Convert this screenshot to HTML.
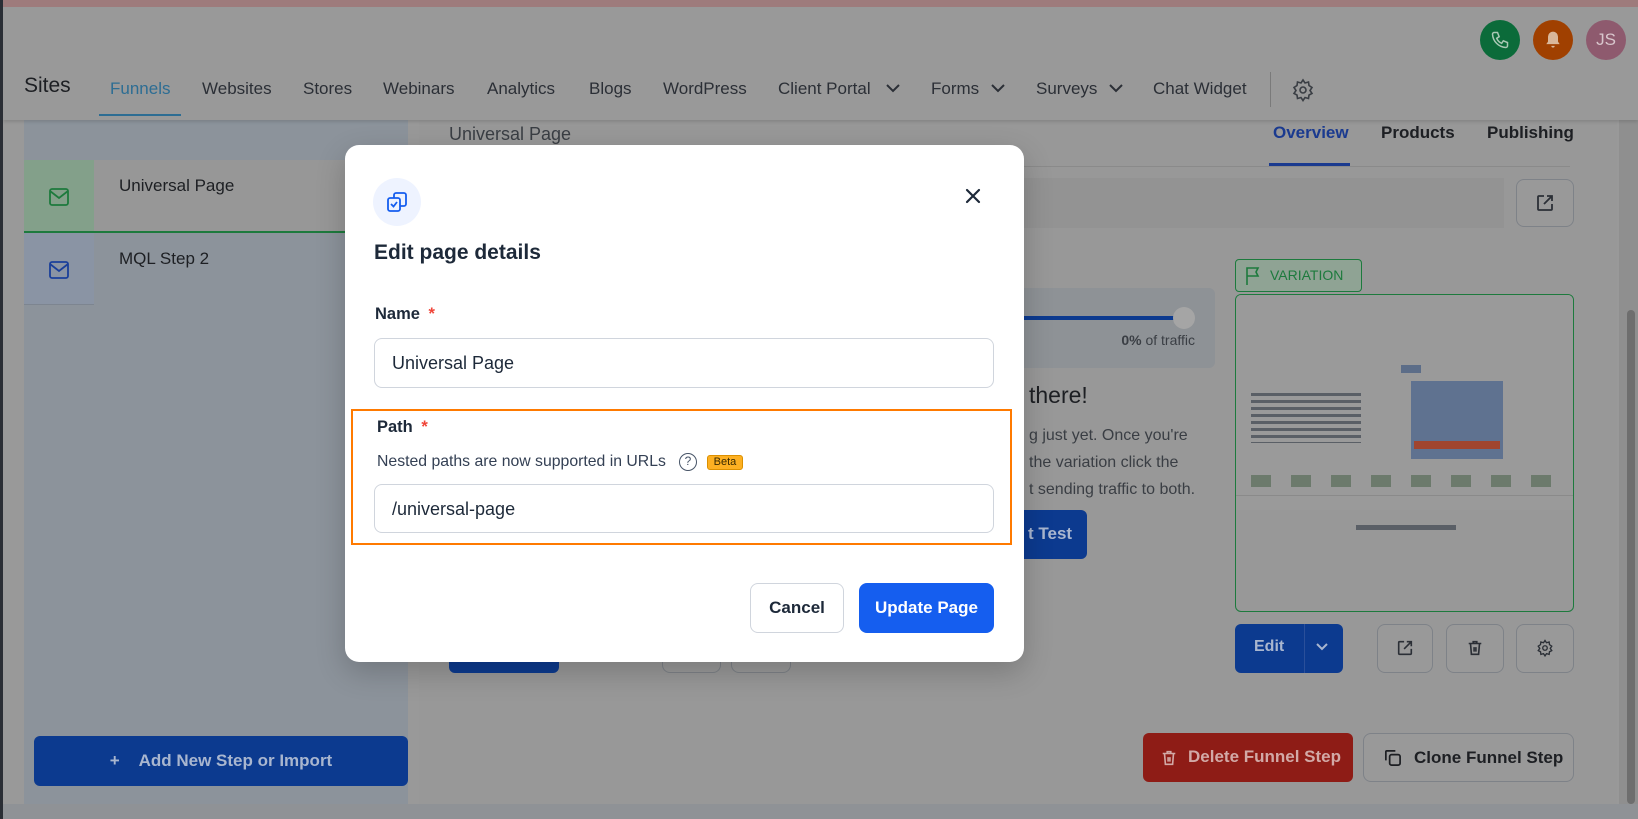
<!DOCTYPE html>
<html><head><meta charset="utf-8"><style>
*{box-sizing:border-box;margin:0;padding:0}
body{width:1638px;height:819px;overflow:hidden;background:#999;font-family:"Liberation Sans",sans-serif;position:relative}
.a{position:absolute}
.nav{position:absolute;top:79px;font-size:17px;color:#2b2f36;z-index:3}
.circ{position:absolute;border-radius:50%;width:40px;height:40px;display:flex;align-items:center;justify-content:center;z-index:3}
.btnO{position:absolute;border:1px solid #7e8288;border-radius:8px;background:#999}
.h{z-index:3}
</style></head><body>
<div class="a h" style="left:0;top:0;width:1638px;height:7px;background:#9e7b7c;z-index:4"></div>
<div class="a" style="left:0;top:0;width:3px;height:819px;background:#2a2e35;z-index:4"></div>
<!-- header -->
<div class="a h" style="left:3px;top:7px;width:1635px;height:113px;background:#999;box-shadow:0 2px 3px rgba(0,0,0,.12)"></div>
<div class="a h" style="left:24px;top:74px;font-size:21px;color:#1d1f23">Sites</div>
<div class="nav" style="left:110px;color:#2d6d93">Funnels</div>
<div class="a h" style="left:99px;top:114px;width:82px;height:2px;background:#2d6d93"></div>
<div class="nav" style="left:202px">Websites</div>
<div class="nav" style="left:303px">Stores</div>
<div class="nav" style="left:383px">Webinars</div>
<div class="nav" style="left:487px">Analytics</div>
<div class="nav" style="left:589px">Blogs</div>
<div class="nav" style="left:663px">WordPress</div>
<div class="nav" style="left:778px">Client Portal</div>
<div class="nav" style="left:931px">Forms</div>
<div class="nav" style="left:1036px">Surveys</div>
<div class="nav" style="left:1153px">Chat Widget</div>
<svg class="a h" style="left:885px;top:82px" width="16" height="12"><path d="M2 3l6 6 6-6" stroke="#2b2f36" stroke-width="2" fill="none"/></svg>
<svg class="a h" style="left:990px;top:82px" width="16" height="12"><path d="M2 3l6 6 6-6" stroke="#2b2f36" stroke-width="2" fill="none"/></svg>
<svg class="a h" style="left:1108px;top:82px" width="16" height="12"><path d="M2 3l6 6 6-6" stroke="#2b2f36" stroke-width="2" fill="none"/></svg>
<div class="a h" style="left:1270px;top:72px;width:1px;height:35px;background:#7a7a7a"></div>
<svg class="a h" style="left:1291px;top:78px" width="24" height="24" viewBox="0 0 24 24" fill="none" stroke="#3a3e44" stroke-width="1.6"><circle cx="12" cy="12" r="3"/><path d="M12 2l2 3 3.5-1 .5 3.5 3 2-2 3 2 3-3 1.5-.5 3.5-3.5-1-2 3-2-3-3.5 1-.5-3.5-3-1.5 2-3-2-3 3-2 .5-3.5 3.5 1z"/></svg>
<div class="circ" style="left:1480px;top:20px;background:#0b6b3a"><svg width="20" height="20" viewBox="0 0 24 24" fill="none" stroke="#a8c8b4" stroke-width="1.8"><path d="M5 3h4l2 5-3 2a11 11 0 006 6l2-3 5 2v4a2 2 0 01-2 2A17 17 0 013 5a2 2 0 012-2z"/></svg></div>
<div class="circ" style="left:1533px;top:20px;background:#a04000"><svg width="20" height="22" viewBox="0 0 24 24" fill="#d9b79a"><path d="M12 2a6 6 0 00-6 6v6l-2 3h16l-2-3V8a6 6 0 00-6-6zM10 19a2 2 0 004 0z"/></svg></div>
<div class="circ" style="left:1586px;top:20px;background:#8e5a6e;color:#d8c6cc;font-size:17px">JS</div>
<!-- left panel -->
<div class="a" style="left:24px;top:120px;width:384px;height:684px;background:#8c939b"></div>
<div class="a" style="left:24px;top:160px;width:384px;height:72px;background:#979797"></div>
<div class="a" style="left:24px;top:160px;width:70px;height:72px;background:#83a08a"></div>
<div class="a" style="left:24px;top:231px;width:384px;height:2px;background:#1d7a3d"></div>
<div class="a" style="left:48px;top:232px;width:0;height:0;border-left:11px solid transparent;border-right:11px solid transparent;border-top:12px solid #1d7a3d"></div>
<div class="a" style="left:24px;top:233px;width:70px;height:72px;background:#8a94a4;border-bottom:1px solid #7d8590"></div>
<svg class="a" style="left:49px;top:188px" width="20" height="18" viewBox="0 0 20 18" fill="none" stroke="#1d7a3d" stroke-width="1.8"><rect x="1" y="1" width="18" height="16" rx="2"/><path d="M1 3l9 7 9-7"/></svg>
<svg class="a" style="left:49px;top:261px" width="20" height="18" viewBox="0 0 20 18" fill="none" stroke="#1a3f9a" stroke-width="1.8"><rect x="1" y="1" width="18" height="16" rx="2"/><path d="M1 3l9 7 9-7"/></svg>
<div class="a" style="left:119px;top:176px;font-size:17px;color:#1d1f23">Universal Page</div>
<div class="a" style="left:119px;top:249px;font-size:17px;color:#1d1f23">MQL Step 2</div>
<div class="a" style="left:34px;top:736px;width:374px;height:50px;background:#0c3a8f;border-radius:6px;color:#a9b6cf;font-size:17px;display:flex;align-items:center;justify-content:center;font-weight:bold">+&nbsp;&nbsp;&nbsp;&nbsp;Add New Step or Import</div>
<!-- right content -->
<div class="a" style="left:419px;top:120px;width:1198px;height:684px;background:#989898"></div>
<div class="a" style="left:0;top:804px;width:1638px;height:15px;background:#8f9296"></div>
<div class="a" style="left:1619px;top:120px;width:19px;height:684px;background:#8f8f8f"></div>
<div class="a" style="left:1627px;top:310px;width:8px;height:494px;background:#6e6e6e;border-radius:4px"></div>
<div class="a" style="left:449px;top:124px;font-size:18px;color:#3a3e44">Universal Page</div>
<div class="a" style="left:1273px;top:123px;font-size:17px;color:#1a3a8f;font-weight:bold">Overview</div>
<div class="a" style="left:1381px;top:123px;font-size:17px;color:#1d1f23;font-weight:bold">Products</div>
<div class="a" style="left:1487px;top:123px;font-size:17px;color:#1d1f23;font-weight:bold">Publishing</div>
<div class="a" style="left:1000px;top:166px;width:570px;height:1px;background:#8a8a8a"></div>
<div class="a" style="left:1269px;top:163px;width:81px;height:3px;background:#1a3a8f"></div>
<div class="a" style="left:419px;top:178px;width:1085px;height:50px;background:#939393"></div>
<div class="btnO" style="left:1516px;top:179px;width:58px;height:48px"></div>
<svg class="a" style="left:1535px;top:193px" width="20" height="20" viewBox="0 0 20 20" fill="none" stroke="#2b2f36" stroke-width="1.8"><path d="M9 3H4a1 1 0 00-1 1v12a1 1 0 001 1h12a1 1 0 001-1v-5M12 3h5v5M17 3l-8 8"/></svg>
<div class="a" style="left:1000px;top:288px;width:215px;height:80px;background:#8e9296;border-radius:6px"></div>
<div class="a" style="left:1020px;top:316px;width:163px;height:4px;background:#0c3a8f"></div>
<div class="a" style="left:1173px;top:307px;width:22px;height:22px;border-radius:50%;background:#a5a5a5"></div>
<div class="a" style="left:1100px;top:332px;font-size:14px;color:#3a3e44;width:95px;text-align:right"><b>0%</b> of traffic</div>
<div class="a" style="left:1029px;top:382px;font-size:23px;color:#1d1f23">there!</div>
<div class="a" style="left:1029px;top:422px;font-size:16px;color:#3a3e44;line-height:27px">g just yet. Once you're<br>the variation click the<br>t sending traffic to both.</div>
<div class="a" style="left:1024px;top:510px;width:63px;height:49px;background:#0c3a8f;border-radius:0 6px 6px 0;color:#a9b6cf;font-size:17px;font-weight:bold;padding:14px 0 0 4px">t Test</div>
<div class="a" style="left:1235px;top:259px;width:127px;height:33px;border:1px solid #1d7a3d;border-radius:4px;background:#8fa394;color:#1d7a3d;font-size:14px;padding:7px 0 0 34px">VARIATION</div>
<svg class="a" style="left:1245px;top:266px" width="16" height="20" viewBox="0 0 16 20" fill="none" stroke="#1d7a3d" stroke-width="1.6"><path d="M2 19V2h11l-2 4 2 4H2"/></svg>
<div class="a" style="left:1235px;top:294px;width:339px;height:318px;border:1px solid #1d7a3d;border-radius:6px;background:#989898;overflow:hidden">
 <div class="a" style="left:0;top:0;width:339px;height:215px;background:#9a9a9a"></div>
 <div class="a" style="left:165px;top:70px;width:20px;height:8px;background:#5c6d88"></div>
 <div class="a" style="left:15px;top:98px;width:110px;height:50px;background:repeating-linear-gradient(#5a5f66 0 3px,#9a9a9a 3px 7px)"></div>
 <div class="a" style="left:175px;top:86px;width:92px;height:78px;background:#5f7290"></div>
 <div class="a" style="left:178px;top:146px;width:86px;height:8px;background:#a0452f"></div>
 <div class="a" style="left:15px;top:180px;width:300px;height:12px;background:repeating-linear-gradient(90deg,#6c7a6c 0 20px,#9a9a9a 20px 40px)"></div>
 <div class="a" style="left:0;top:200px;width:339px;height:1px;background:#8a8a8a"></div>
 <div class="a" style="left:120px;top:230px;width:100px;height:5px;background:#5a5f66"></div>
</div>
<div class="a" style="left:1235px;top:624px;width:108px;height:49px;background:#0c3a8f;border-radius:6px"></div>
<div class="a" style="left:1304px;top:624px;width:1px;height:49px;background:#2a4f9a"></div>
<div class="a" style="left:1254px;top:638px;color:#a9b6cf;font-size:16px;font-weight:bold">Edit</div>
<svg class="a" style="left:1315px;top:642px" width="14" height="10"><path d="M2 2l5 5 5-5" stroke="#a9b6cf" stroke-width="2" fill="none"/></svg>
<div class="btnO" style="left:1377px;top:624px;width:56px;height:49px"></div>
<div class="btnO" style="left:1446px;top:624px;width:58px;height:49px"></div>
<div class="btnO" style="left:1516px;top:624px;width:58px;height:49px"></div>
<svg class="a" style="left:1396px;top:639px" width="18" height="18" viewBox="0 0 20 20" fill="none" stroke="#2b2f36" stroke-width="1.8"><path d="M9 3H4a1 1 0 00-1 1v12a1 1 0 001 1h12a1 1 0 001-1v-5M12 3h5v5M17 3l-8 8"/></svg>
<svg class="a" style="left:1466px;top:639px" width="18" height="18" viewBox="0 0 20 20" fill="none" stroke="#2b2f36" stroke-width="1.8"><path d="M3 5h14M8 5V3h4v2M5 5l1 12h8l1-12M9 9v5M11 9v5"/></svg>
<svg class="a" style="left:1536px;top:639px" width="18" height="18" viewBox="0 0 24 24" fill="none" stroke="#2b2f36" stroke-width="1.8"><circle cx="12" cy="12" r="3"/><path d="M12 2l2 3 3.5-1 .5 3.5 3 2-2 3 2 3-3 1.5-.5 3.5-3.5-1-2 3-2-3-3.5 1-.5-3.5-3-1.5 2-3-2-3 3-2 .5-3.5 3.5 1z"/></svg>
<div class="a" style="left:1143px;top:733px;width:210px;height:49px;background:#8e1c16;border-radius:6px;color:#d2a9a6;font-size:17px;font-weight:bold;padding:14px 0 0 45px">Delete Funnel Step</div>
<svg class="a" style="left:1160px;top:748px" width="18" height="20" viewBox="0 0 20 20" fill="none" stroke="#d2a9a6" stroke-width="1.8"><path d="M3 5h14M8 5V3h4v2M5 5l1 12h8l1-12M9 9v5M11 9v5"/></svg>
<div class="btnO" style="left:1363px;top:733px;width:211px;height:49px;color:#1d1f23;font-size:17px;font-weight:bold;padding:14px 0 0 50px">Clone Funnel Step</div>
<svg class="a" style="left:1383px;top:748px" width="19" height="19" viewBox="0 0 20 20" fill="none" stroke="#1d1f23" stroke-width="1.8"><rect x="7" y="7" width="11" height="11" rx="2"/><path d="M13 3H4a1 1 0 00-1 1v9"/></svg>
<div class="a" style="left:449px;top:650px;width:110px;height:23px;background:#0c3a8f;border-radius:0 0 6px 6px"></div>
<div class="btnO" style="left:662px;top:640px;width:59px;height:33px"></div>
<div class="btnO" style="left:731px;top:640px;width:60px;height:33px"></div>
<!-- modal -->
<div class="a" style="left:345px;top:145px;width:679px;height:517px;background:#fff;border-radius:14px;box-shadow:0 10px 30px rgba(0,0,0,.2);z-index:5">
 <div class="a" style="left:28px;top:33px;width:48px;height:48px;border-radius:50%;background:#eef3ff"></div>
 <svg class="a" style="left:40px;top:45px" width="24" height="24" viewBox="0 0 24 24" fill="none" stroke="#155eef" stroke-width="1.8"><rect x="9" y="3" width="12" height="13" rx="2"/><rect x="3" y="8" width="12" height="13" rx="2" fill="#eef3ff"/><path d="M6 14l2.5 2.5L12 12"/></svg>
 <svg class="a" style="left:619px;top:42px" width="18" height="18" viewBox="0 0 18 18"><path d="M3 3l12 12M15 3L3 15" stroke="#1d2939" stroke-width="2.2" stroke-linecap="round"/></svg>
 <div class="a" style="left:29px;top:96px;font-size:21px;font-weight:bold;color:#1d2939">Edit page details</div>
 <div class="a" style="left:30px;top:160px;font-size:16.5px;color:#1d2939;font-weight:bold">Name <span style="color:#f04438;margin-left:4px">*</span></div>
 <div class="a" style="left:29px;top:193px;width:620px;height:50px;border:1px solid #d0d5dd;border-radius:8px;font-size:18px;color:#1d2939;padding:14px 0 0 17px">Universal Page</div>
 <div class="a" style="left:6px;top:264px;width:661px;height:136px;border:2px solid #ff7a00"></div>
 <div class="a" style="left:32px;top:273px;font-size:16.5px;color:#1d2939;font-weight:bold">Path <span style="color:#f04438;margin-left:4px">*</span></div>
 <div class="a" style="left:32px;top:308px;font-size:15.8px;color:#344054;white-space:nowrap">Nested paths are now supported in URLs</div>
 <div class="a" style="left:334px;top:308px;width:18px;height:18px;border:1.5px solid #475467;border-radius:50%;font-size:12px;text-align:center;line-height:15px;color:#475467">?</div>
 <div class="a" style="left:362px;top:310px;width:36px;height:15px;background:#fdb022;border:1px solid #dc9000;border-radius:3px;font-size:11px;text-align:center;line-height:13px;color:#3a2a00">Beta</div>
 <div class="a" style="left:29px;top:339px;width:620px;height:49px;border:1px solid #d0d5dd;border-radius:8px;font-size:18px;color:#1d2939;padding:14px 0 0 17px">/universal-page</div>
 <div class="a" style="left:405px;top:438px;width:94px;height:50px;border:1px solid #d0d5dd;border-radius:8px;font-size:17px;color:#1d2939;font-weight:bold;text-align:center;line-height:48px">Cancel</div>
 <div class="a" style="left:514px;top:438px;width:135px;height:50px;background:#155eef;border-radius:8px;font-size:17px;color:#fff;font-weight:bold;text-align:center;line-height:50px">Update Page</div>
</div>
</body></html>
